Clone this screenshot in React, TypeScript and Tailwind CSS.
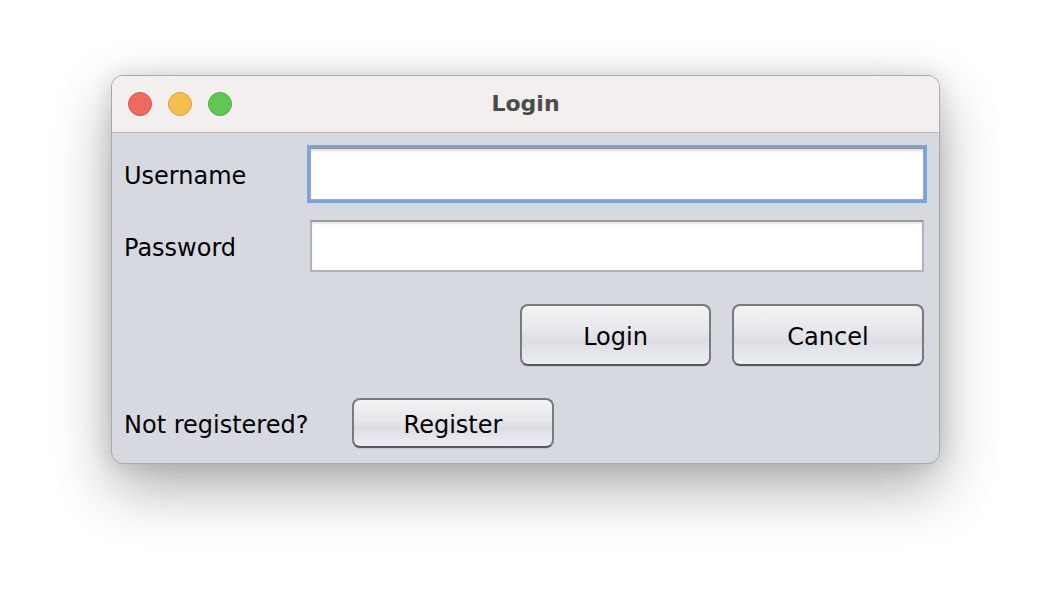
import React from "react";

const font = { fontFamily: '"DejaVu Sans", "Liberation Sans", sans-serif' };

function MacButton({ label, className }: { label: string; className: string }) {
  return (
    <button
      className={`flex items-center justify-center pt-[3px] rounded-[8px] border-2 border-[#7a7a7a] border-b-[#585858] bg-[linear-gradient(to_bottom,#f3f3f5_0%,#e6e7ea_45%,#dcdee3_60%,#eceef5_100%)] text-[24px] text-black shadow-[0_1px_0_rgba(0,0,0,0.08)] ${className}`}
      style={font}
    >
      {label}
    </button>
  );
}

export default function App() {
  return (
    <div className="w-[1052px] h-[612px] bg-white overflow-hidden pl-[111px] pt-[75px]" style={font}>
      <div className="w-[829px] h-[389px] rounded-[12px] border border-[#a9a9ab] bg-[#d6d9e0] overflow-hidden shadow-[0_24px_60px_rgba(0,0,0,0.32),0_0_22px_rgba(0,0,0,0.12)] flex flex-col">
        {/* Title bar */}
        <div className="relative h-[57px] shrink-0 bg-[#f4efef] border-b border-[#b9b9bb] flex items-center justify-center">
          <div className="absolute left-[16px] top-[16px] flex gap-[16px]">
            <div className="w-[24px] h-[24px] rounded-full bg-[#ee6a5f] border border-[#d5544a]" />
            <div className="w-[24px] h-[24px] rounded-full bg-[#f6be50] border border-[#d9a23b]" />
            <div className="w-[24px] h-[24px] rounded-full bg-[#62c655] border border-[#4fab43]" />
          </div>
          <span className="text-[22px] font-bold text-[#4b4b4b] leading-none">Login</span>
        </div>

        {/* Body */}
        <div className="flex flex-col pl-[12px] pr-[15px] pt-[15px]">
          <div className="flex items-center h-[52px]">
            <span className="w-[186px] text-[24px] text-black leading-none pt-[3px]">Username</span>
            <div className="w-[614px] h-[52px] bg-white border border-[#a8a8a8] border-t-[#8f8f8f] shadow-[0_0_0_3px_#79a6d9,inset_0_2px_2px_rgba(0,0,0,0.12)]" />
          </div>
          <div className="flex items-center h-[52px] mt-[20px]">
            <span className="w-[186px] text-[24px] text-black leading-none pt-[3px]">Password</span>
            <div className="w-[614px] h-[52px] bg-white border-2 border-[#b3b3b3] border-t-[#999999] shadow-[inset_0_2px_2px_rgba(0,0,0,0.10)]" />
          </div>
          <div className="flex justify-end gap-[21px] mt-[32px]">
            <MacButton label="Login" className="w-[191px] h-[62px]" />
            <MacButton label="Cancel" className="w-[192px] h-[62px]" />
          </div>
          <div className="flex items-center mt-[32px]">
            <span className="w-[228px] text-[24px] text-black leading-none pt-[3px]">Not registered?</span>
            <MacButton label="Register" className="w-[202px] h-[50px]" />
          </div>
        </div>
      </div>
    </div>
  );
}
